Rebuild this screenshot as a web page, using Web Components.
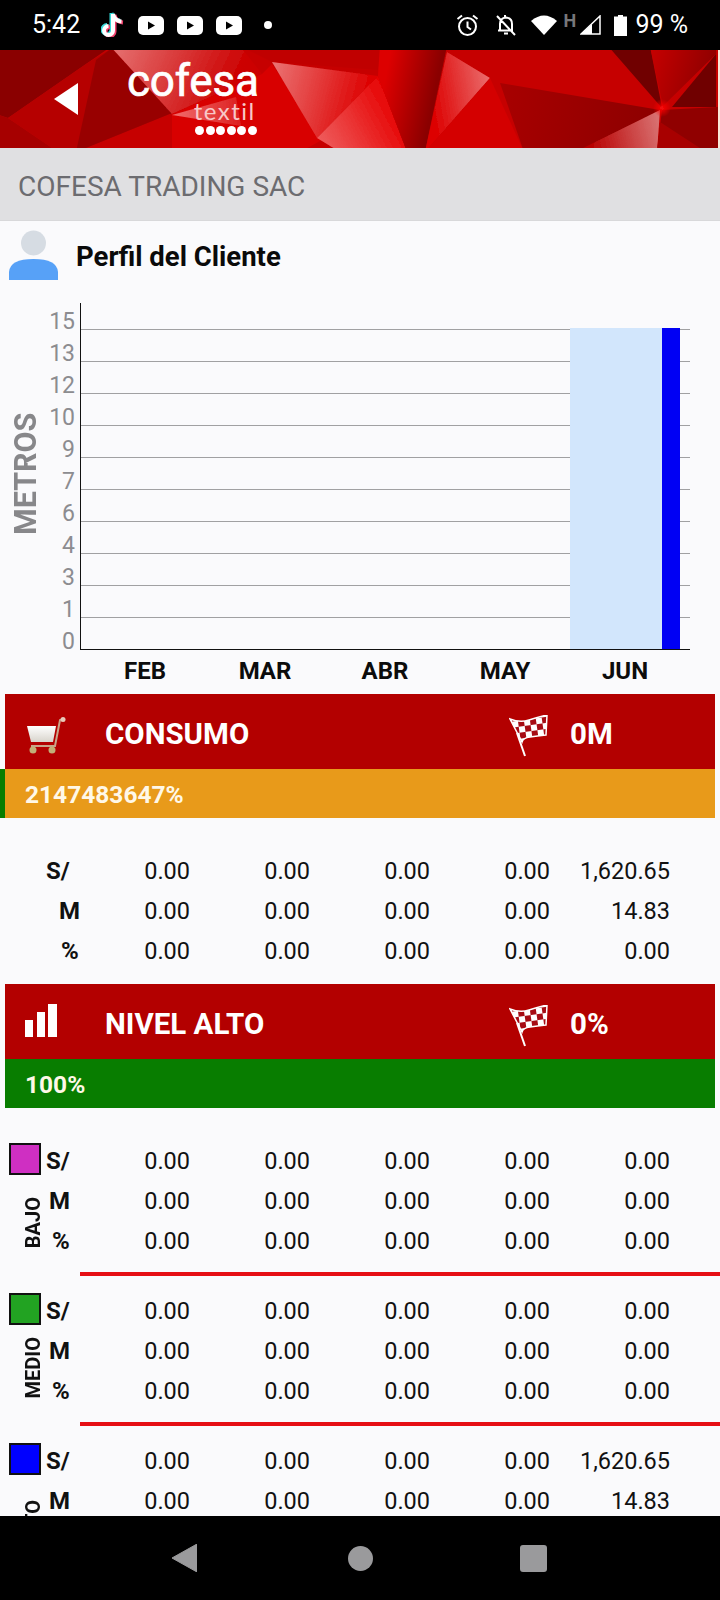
<!DOCTYPE html>
<html lang="es">
<head>
<meta charset="utf-8">
<title>Perfil del Cliente</title>
<style>
  html, body { margin: 0; padding: 0; }
  body {
    width: 720px;
    height: 1600px;
    display: flex;
    flex-direction: column;
    overflow: hidden;
    background: #fafafc;
    font-family: Roboto, "Liberation Sans", sans-serif;
    color: #111;
  }
  main { flex: 1; min-height: 0; overflow: hidden; }
  svg { display: block; }
</style>
</head>
<body>
<status-bar></status-bar>
<main>
  <app-header></app-header>
  <title-bar>COFESA TRADING SAC</title-bar>
  <profile-head>Perfil del Cliente</profile-head>
  <metros-chart></metros-chart>

  <stat-card goal="0M" percent="2147483647%" color="#e89a1a" stripe>
    <svg slot="icon" style="margin-top:6px" width="42" height="40" viewBox="0 0 42 40">
      <defs>
        <linearGradient id="basket" x1="0" y1="0" x2="0" y2="1">
          <stop offset="0" stop-color="#ffffff"/>
          <stop offset="1" stop-color="#d8d4cc"/>
        </linearGradient>
      </defs>
      <path d="M2 10H31L28 26H6Z" fill="url(#basket)"/>
      <path d="M40 3L35 4L30 30H6" fill="none" stroke="#c9a58a" stroke-width="2"/>
      <circle cx="38" cy="3.500" r="2.500" fill="#e8c8b8"/>
      <circle cx="8" cy="34" r="3.500" fill="#c2b078"/>
      <circle cx="27" cy="34" r="3.500" fill="#c2b078"/>
    </svg>
    CONSUMO
  </stat-card>
  <data-row label="S/" label-x="46" values="0.00|0.00|0.00|0.00|1,620.65" class="first"></data-row>
  <data-row label="M" label-x="59" values="0.00|0.00|0.00|0.00|14.83"></data-row>
  <data-row label="%" label-x="61" values="0.00|0.00|0.00|0.00|0.00" class="last"></data-row>

  <stat-card goal="0%" percent="100%" color="#087d00">
    <svg slot="icon" style="margin-bottom:4px" width="33" height="33" viewBox="0 0 33 33" fill="#fff">
      <rect x="0" y="16" width="8" height="17"/>
      <rect x="12" y="8" width="8" height="25"/>
      <rect x="23" y="0" width="9" height="33"/>
    </svg>
    NIVEL ALTO
  </stat-card>

  <level-section label="BAJO" color="#cf2fc2" class="first">
    <data-row label="S/" label-x="2" values="0.00|0.00|0.00|0.00|0.00"></data-row>
    <data-row label="M" label-x="5" values="0.00|0.00|0.00|0.00|0.00"></data-row>
    <data-row label="%" label-x="8" values="0.00|0.00|0.00|0.00|0.00"></data-row>
  </level-section>
  <level-section label="MEDIO" color="#22a322">
    <data-row label="S/" label-x="2" values="0.00|0.00|0.00|0.00|0.00"></data-row>
    <data-row label="M" label-x="5" values="0.00|0.00|0.00|0.00|0.00"></data-row>
    <data-row label="%" label-x="8" values="0.00|0.00|0.00|0.00|0.00"></data-row>
  </level-section>
  <level-section label="ALTO" color="#0000ff">
    <data-row label="S/" label-x="2" values="0.00|0.00|0.00|0.00|1,620.65"></data-row>
    <data-row label="M" label-x="5" values="0.00|0.00|0.00|0.00|14.83"></data-row>
    <data-row label="%" label-x="8" values="0.00|0.00|0.00|0.00|0.00"></data-row>
  </level-section>
</main>
<nav-bar></nav-bar>

<script>
const statusTemplate = document.createElement("template");
statusTemplate.innerHTML = `
    <style>
        :host {
            display: flex;
            align-items: center;
            flex: none;
            height: 50px;
            background: #000;
            color: #fff;
            font: 400 25px/50px Roboto, sans-serif;
        }

        .time { margin-left: 32px; width: 64px; }
        .tiktok { margin: -2px 0 0 5px; }
        .yt { margin-right: 13px; }
        .dot { width: 8px; height: 8px; margin-left: 9px; border-radius: 50%; background: #fff; }
        .right { display: flex; align-items: center; margin-left: auto; }
        .alarm { margin-right: 17px; }
        .bell { margin-right: 15px; }
        .wifi { margin-right: 6px; }
        .h { font: 700 18px/15px Roboto, sans-serif; color: #77777a; margin: -10px 2px 0 0; width: 15px; }
        .signal { margin-right: 13px; }
        .battery { margin-right: 8px; }
        .level { margin-right: 32px; white-space: nowrap; }
    </style>

    <span class="time">5:42</span>
    <svg class="tiktok" width="37" height="26" viewBox="0 0 37 26" fill="none" stroke-width="4">
        <path d="M10.500 2V18.500A4.500 4.500 0 1 1 6 14M10.500 2Q12 9 19 9.500" stroke="#35d8d8"/>
        <path d="M13.500 4V20.500A4.500 4.500 0 1 1 9 16M13.500 4Q15 11 22 11.500" stroke="#f0406c"/>
        <path d="M12 3V19.500A4.500 4.500 0 1 1 7.500 15M12 3Q13.500 10 20.500 10.500" stroke="#fff"/>
    </svg>
    <svg class="yt" width="26" height="19" viewBox="0 0 26 19"><rect width="26" height="19" rx="5" fill="#fff"/><path d="M10 5.500L17 9.500L10 13.500Z" fill="#000"/></svg>
    <svg class="yt" width="26" height="19" viewBox="0 0 26 19"><rect width="26" height="19" rx="5" fill="#fff"/><path d="M10 5.500L17 9.500L10 13.500Z" fill="#000"/></svg>
    <svg class="yt" width="26" height="19" viewBox="0 0 26 19"><rect width="26" height="19" rx="5" fill="#fff"/><path d="M10 5.500L17 9.500L10 13.500Z" fill="#000"/></svg>
    <span class="dot"></span>

    <div class="right">
        <svg class="alarm" width="23" height="23" viewBox="0 0 23 23" fill="none" stroke="#fff" stroke-width="2">
            <circle cx="11.500" cy="12.500" r="8.500"/>
            <path d="M11.500 7.500V13L15 15.500M1.500 5L6 1.500M21.500 5L17 1.500"/>
        </svg>
        <svg class="bell" width="20" height="22" viewBox="0 0 20 22" fill="none" stroke="#fff" stroke-width="2">
            <path d="M4 16.500V10Q4 4 10 3.500Q16 4 16 10V16.500ZM2 16.500H14M8 19.500H12M9 1V3M1 2L19 21"/>
        </svg>
        <svg class="wifi" width="26" height="20" viewBox="0 0 26 20"><path d="M0 6Q13 -5 26 6L13 20Z" fill="#fff"/></svg>
        <span class="h">H</span>
        <svg class="signal" width="21" height="20" viewBox="0 0 21 20">
            <path d="M20 1V19H1Z" fill="none" stroke="#fff" stroke-width="1.500"/>
            <path d="M12 9V19H1Z" fill="#fff"/>
        </svg>
        <svg class="battery" width="13" height="21" viewBox="0 0 13 21"><path d="M4 0H9V1.500H13V21H0V1.500H4Z" fill="#fff"/></svg>
        <span class="level">99 %</span>
    </div>
`;

class StatusBar extends HTMLElement {
  constructor() {
    super();
    this._shadowRoot = this.attachShadow({ mode: "open" });
    this._shadowRoot.appendChild(statusTemplate.content.cloneNode(true));
  }
}

const headerTemplate = document.createElement("template");
headerTemplate.innerHTML = `
    <style>
        :host {
            display: flex;
            position: relative;
            height: 98px;
            overflow: hidden;
            background: #fbe6d8;
        }

        .art { position: absolute; left: 0; top: 0; }
        .back { position: relative; margin: 33px 49px 0 54px; }
        .logo {
            position: relative;
            display: flex;
            flex-direction: column;
            align-items: flex-end;
            color: #fff;
            padding-top: 10px;
        }
        .name { font: 400 44px/42px Roboto, sans-serif; letter-spacing: -0.2px; -webkit-text-stroke: 0.7px #fff; }
        .sub { font: 400 24px/20px Lato, sans-serif; letter-spacing: 1.500px; color: #f8c8c8; margin: -1px 3px 0 0; }
        .dots { display: flex; gap: 1.500px; margin: 5px 2px 0 0; }
        .dots i { width: 9px; height: 9px; border-radius: 50%; background: #fff; }
    </style>

    <svg class="art" width="720" height="98" viewBox="0 0 720 98">
        <defs>
            <filter id="soft" x="-2%" y="-5%" width="104%" height="110%"><feGaussianBlur stdDeviation="0.600"/></filter>
            <linearGradient id="pinkA" gradientUnits="userSpaceOnUse" x1="120" y1="0" x2="230" y2="50">
                <stop offset="0" stop-color="#e46a6a"/><stop offset="1" stop-color="#cc0000"/>
            </linearGradient>
            <linearGradient id="pinkB" gradientUnits="userSpaceOnUse" x1="275" y1="15" x2="370" y2="40">
                <stop offset="0" stop-color="#ea7070"/><stop offset="1" stop-color="#dd0000"/>
            </linearGradient>
            <linearGradient id="pinkC" gradientUnits="userSpaceOnUse" x1="320" y1="90" x2="395" y2="50">
                <stop offset="0" stop-color="#ee5a5a"/><stop offset="1" stop-color="#e60000"/>
            </linearGradient>
            <linearGradient id="wedge" gradientUnits="userSpaceOnUse" x1="385" y1="30" x2="435" y2="40">
                <stop offset="0" stop-color="#dd0000"/><stop offset="1" stop-color="#8a0000"/>
            </linearGradient>
            <linearGradient id="pinkD" gradientUnits="userSpaceOnUse" x1="430" y1="50" x2="490" y2="40">
                <stop offset="0" stop-color="#dd0000"/><stop offset="1" stop-color="#ea6a6a"/>
            </linearGradient>
            <linearGradient id="pinkE" gradientUnits="userSpaceOnUse" x1="590" y1="97" x2="660" y2="80">
                <stop offset="0" stop-color="#b80000"/><stop offset="1" stop-color="#d87070"/>
            </linearGradient>
            <linearGradient id="darkF" gradientUnits="userSpaceOnUse" x1="500" y1="40" x2="650" y2="70">
                <stop offset="0" stop-color="#a80000"/><stop offset="1" stop-color="#8e0000"/>
            </linearGradient>
            <linearGradient id="pale" gradientUnits="userSpaceOnUse" x1="175" y1="64" x2="240" y2="60">
                <stop offset="0" stop-color="#f06a6a"/><stop offset="1" stop-color="#dd2020"/>
            </linearGradient>
            <linearGradient id="topRight" gradientUnits="userSpaceOnUse" x1="650" y1="10" x2="716" y2="30">
                <stop offset="0" stop-color="#c40000"/><stop offset="1" stop-color="#8a0000"/>
            </linearGradient>
            <radialGradient id="hot" gradientUnits="userSpaceOnUse" cx="662" cy="58" r="9">
                <stop offset="0" stop-color="#f80808"/><stop offset="1" stop-color="#f80808" stop-opacity="0"/>
            </radialGradient>
        </defs>
        <g filter="url(#soft)">
            <rect x="-4" y="-4" width="722" height="106" fill="#c60000"/>
            <path d="M-4 -4H112L86 14L8 68L-4 64Z" fill="#8a0000"/>
            <path d="M-4 64L8 68L58 102H-4Z" fill="#a60000"/>
            <path d="M8 68L86 14L112 -2L172 63L76 102H58Z" fill="#b60000"/>
            <path d="M96 10L112 -2L172 63L76 102Z" fill="#980000"/>
            <path d="M110 -4H240L262 24L172 64Z" fill="url(#pinkA)"/>
            <path d="M172 64L262 24L272 14L322 90L300 102H172Z" fill="#d80000"/>
            <path d="M172 65L236 47L241 76Z" fill="url(#pale)"/>
            <path d="M240 -4H380L378 20L272 12Z" fill="#c00000"/>
            <path d="M272 12L378 26L317 88Z" fill="url(#pinkB)"/>
            <path d="M378 26L407 102H340L317 88Z" fill="url(#pinkC)"/>
            <path d="M380 -4H447L425 102H407L378 26Z" fill="url(#wedge)"/>
            <path d="M447 2L490 28L425 102Z" fill="url(#pinkD)"/>
            <path d="M490 28L524 102H425Z" fill="#d40000"/>
            <path d="M500 33L660 60L583 102H524Z" fill="url(#darkF)"/>
            <path d="M660 60L657 102H575Z" fill="url(#pinkE)"/>
            <path d="M608 -4H650L662 58Z" fill="#700000"/>
            <path d="M650 -4H716V4L663 56Z" fill="url(#topRight)"/>
            <path d="M716 4V57H672Z" fill="#700000"/>
            <path d="M662 60L718 57V102H657Z" fill="#900000"/>
            <path d="M660 72L706 102H657Z" fill="#a80000"/>
            <circle cx="662" cy="58" r="9" fill="url(#hot)"/>
        </g>
        <rect x="718" y="0" width="2" height="98" fill="#fbe6d8"/>
    </svg>
    <svg class="back" width="24" height="32" viewBox="0 0 24 32"><path d="M0 16L24 0V32Z" fill="#fff"/></svg>
    <div class="logo">
        <span class="name">cofesa</span>
        <span class="sub">textil</span>
        <span class="dots"><i></i><i></i><i></i><i></i><i></i><i></i></span>
    </div>
`;

class AppHeader extends HTMLElement {
  constructor() {
    super();
    this._shadowRoot = this.attachShadow({ mode: "open" });
    this._shadowRoot.appendChild(headerTemplate.content.cloneNode(true));
  }
}

const titleTemplate = document.createElement("template");
titleTemplate.innerHTML = `
    <style>
        :host {
            display: flex;
            align-items: center;
            box-sizing: border-box;
            height: 73px;
            padding: 5px 0 0 18px;
            background: #e0e0e2;
            border-bottom: 1px solid #d8d8da;
            color: #6c6c70;
            font: 400 28px Roboto, sans-serif;
        }
    </style>
    <slot></slot>
`;

class TitleBar extends HTMLElement {
  constructor() {
    super();
    this._shadowRoot = this.attachShadow({ mode: "open" });
    this._shadowRoot.appendChild(titleTemplate.content.cloneNode(true));
  }
}

const profileTemplate = document.createElement("template");
profileTemplate.innerHTML = `
    <style>
        :host {
            display: flex;
            align-items: center;
            height: 82px;
            font: 700 27.500px Roboto, sans-serif;
            color: #0a0a0a;
        }

        svg { margin: -14px 17px 0 9px; flex: none; }
        span { margin-top: -12px; }
    </style>
    <svg width="50" height="50" viewBox="0 0 50 50">
        <circle cx="24.500" cy="13" r="12.500" fill="#d6dce3"/>
        <path d="M0 50V42Q1 29 24.500 29Q48 29 49 42V50Z" fill="#57a1f7"/>
    </svg>
    <span><slot></slot></span>
`;

class ProfileHead extends HTMLElement {
  constructor() {
    super();
    this._shadowRoot = this.attachShadow({ mode: "open" });
    this._shadowRoot.appendChild(profileTemplate.content.cloneNode(true));
  }
}

const chartTemplate = document.createElement("template");
chartTemplate.innerHTML = `
    <style>
        :host {
            display: block;
            font-family: Roboto, sans-serif;
            padding-bottom: 2px;
        }

        .top { display: flex; height: 347px; }
        .axis-name {
            width: 38px;
            margin-left: 11px;
            writing-mode: vertical-rl;
            transform: rotate(180deg);
            text-align: center;
            font: 700 30.500px/30px Roboto, sans-serif;
            color: #87878a;
            height: 347px;
            padding-top: 6px;
            box-sizing: border-box;
        }
        .ticks {
            width: 26px;
            padding-top: 3px;
            text-align: right;
            font-size: 23px;
            line-height: 32px;
            color: #8c8c90;
        }
        .plot {
            position: relative;
            box-sizing: border-box;
            width: 610px;
            margin-left: 5px;
            padding-top: 26px;
            border-left: 1px solid #111;
            border-bottom: 1px solid #111;
        }
        .line { height: 32px; box-sizing: border-box; border-top: 1px solid #a0a0a2; }
        .bar { position: absolute; top: 25px; bottom: 0; }
        .band { left: 489px; width: 92px; background: #d2e6fc; }
        .value { left: 581px; width: 18px; background: #0000f4; }
        .months {
            display: grid;
            grid-template-columns: repeat(5, 120px);
            margin-left: 85px;
            text-align: center;
            font: 700 24px/42px Roboto, sans-serif;
            color: #0c0c0c;
        }
    </style>
    <div class="top">
        <div class="axis-name">METROS</div>
        <div class="ticks"></div>
        <div class="plot">
            <div class="bar band"></div>
            <div class="bar value"></div>
        </div>
    </div>
    <div class="months"></div>
`;

class MetrosChart extends HTMLElement {
  constructor() {
    super();
    this._shadowRoot = this.attachShadow({ mode: "open" });
    this._shadowRoot.appendChild(chartTemplate.content.cloneNode(true));
    this.$ticks = this._shadowRoot.querySelector(".ticks");
    this.$plot = this._shadowRoot.querySelector(".plot");
    this.$months = this._shadowRoot.querySelector(".months");
  }

  connectedCallback() {
    ["15", "13", "12", "10", "9", "7", "6", "4", "3", "1", "0"].forEach((tick, i) => {
      const $tick = document.createElement("div");
      $tick.textContent = tick;
      this.$ticks.appendChild($tick);
      if (i < 10) {
        const $line = document.createElement("div");
        $line.className = "line";
        this.$plot.insertBefore($line, this.$plot.firstChild);
      }
    });
    ["FEB", "MAR", "ABR", "MAY", "JUN"].forEach((month) => {
      const $month = document.createElement("div");
      $month.textContent = month;
      this.$months.appendChild($month);
    });
  }
}

const cardTemplate = document.createElement("template");
cardTemplate.innerHTML = `
    <style>
        :host {
            display: block;
            margin: 0 5px;
            color: #fff;
            font-family: Roboto, sans-serif;
        }

        .head {
            display: flex;
            align-items: center;
            box-sizing: border-box;
            height: 75px;
            padding-top: 5px;
            background: #b30000;
            font-weight: 700;
            font-size: 29.500px;
        }
        .icon { width: 100px; box-sizing: border-box; padding: 0 0 3px 20px; flex: none; }
        .name { width: 404px; flex: none; }
        .flag { flex: none; margin-top: 4px; }
        .bar {
            box-sizing: border-box;
            height: 49px;
            padding: 3px 0 0 20px;
            font: 700 24.500px/46px Roboto, sans-serif;
            color: #fff8e8;
        }
        :host([stripe]) .bar {
            margin-left: -5px;
            border-left: 5px solid #087d00;
        }
    </style>
    <div class="head">
        <div class="icon"><slot name="icon"></slot></div>
        <div class="name"><slot></slot></div>
        <svg class="flag" width="61" height="42" viewBox="0 0 61 42">
            <defs>
                <pattern id="checks" width="12" height="12" patternUnits="userSpaceOnUse" patternTransform="rotate(-8) translate(2 1)">
                    <rect width="12" height="12" fill="#fff"/>
                    <rect width="6" height="6" fill="#a60c14"/>
                    <rect x="6" y="6" width="6" height="6" fill="#a60c14"/>
                </pattern>
            </defs>
            <path d="M1 4Q11 8 20 5T38 0L37 20Q28 21 21 22T13 27Z" fill="url(#checks)" stroke="#fff" stroke-width="1.500"/>
            <path d="M8 18L16 41" stroke="#fff" stroke-width="2"/>
        </svg>
        <div class="goal"></div>
    </div>
    <div class="bar"></div>
`;

class StatCard extends HTMLElement {
  constructor() {
    super();
    this._shadowRoot = this.attachShadow({ mode: "open" });
    this._shadowRoot.appendChild(cardTemplate.content.cloneNode(true));
    this.$goal = this._shadowRoot.querySelector(".goal");
    this.$bar = this._shadowRoot.querySelector(".bar");
  }

  connectedCallback() {
    this.$goal.textContent = this.getAttribute("goal");
    this.$bar.textContent = this.getAttribute("percent");
    this.$bar.style.background = this.getAttribute("color");
  }
}

const rowTemplate = document.createElement("template");
rowTemplate.innerHTML = `
    <style>
        :host {
            display: grid;
            grid-template-columns: var(--label-width, 70px) repeat(5, 120px);
            height: 40px;
            font: 400 23.500px/40px Roboto, sans-serif;
            color: #111;
            white-space: nowrap;
        }
        :host(.first) { margin-top: 33px; }
        :host(.last) { margin-bottom: 13px; }

        .label { font-weight: 700; font-size: 24px; }
        .value { text-align: right; }
    </style>
    <div class="label"></div>
`;

class DataRow extends HTMLElement {
  constructor() {
    super();
    this._shadowRoot = this.attachShadow({ mode: "open" });
    this._shadowRoot.appendChild(rowTemplate.content.cloneNode(true));
    this.$label = this._shadowRoot.querySelector(".label");
  }

  connectedCallback() {
    this.$label.textContent = this.getAttribute("label");
    this.$label.style.paddingLeft = this.getAttribute("label-x") + "px";
    this.getAttribute("values").split("|").forEach((value) => {
      const $value = document.createElement("div");
      $value.className = "value";
      $value.textContent = value;
      this._shadowRoot.appendChild($value);
    });
  }
}

const sectionTemplate = document.createElement("template");
sectionTemplate.innerHTML = `
    <style>
        :host {
            display: block;
            --label-width: 26px;
        }
        :host(.first) { margin-top: 33px; }

        .body { display: flex; height: 120px; }
        .side { width: 44px; flex: none; display: flex; flex-direction: column; }
        .swatch {
            box-sizing: border-box;
            width: 32px;
            height: 32px;
            margin: 2px 0 0 9px;
            border: 2px solid #111;
        }
        .name {
            margin: auto 0 13px 24px;
            width: 18px;
            writing-mode: vertical-rl;
            transform: rotate(180deg);
            font: 700 20px/18px Roboto, sans-serif;
            color: #111;
        }
        .rule { height: 4px; margin: 11px 0 15px 80px; background: #e60f14; }
    </style>
    <div class="body">
        <div class="side">
            <div class="swatch"></div>
            <div class="name"></div>
        </div>
        <div class="rows"><slot></slot></div>
    </div>
    <div class="rule"></div>
`;

class LevelSection extends HTMLElement {
  constructor() {
    super();
    this._shadowRoot = this.attachShadow({ mode: "open" });
    this._shadowRoot.appendChild(sectionTemplate.content.cloneNode(true));
  }

  connectedCallback() {
    this._shadowRoot.querySelector(".name").textContent = this.getAttribute("label");
    this._shadowRoot.querySelector(".swatch").style.background = this.getAttribute("color");
  }
}

const navTemplate = document.createElement("template");
navTemplate.innerHTML = `
    <style>
        :host {
            display: flex;
            align-items: center;
            flex: none;
            height: 84px;
            background: #000;
        }

        .back { margin-left: 172px; }
        .home { margin-left: 151px; }
        .recent { margin-left: 147px; }
    </style>
    <svg class="back" width="25" height="28" viewBox="0 0 25 28"><path d="M0 14L25 0V28Z" fill="#9a9a9c" stroke="#9a9a9c" stroke-linejoin="round"/></svg>
    <svg class="home" width="25" height="25" viewBox="0 0 25 25"><circle cx="12.500" cy="12.500" r="12.500" fill="#9a9a9c"/></svg>
    <svg class="recent" width="27" height="27" viewBox="0 0 27 27"><rect width="27" height="27" rx="3" fill="#9a9a9c"/></svg>
`;

class NavBar extends HTMLElement {
  constructor() {
    super();
    this._shadowRoot = this.attachShadow({ mode: "open" });
    this._shadowRoot.appendChild(navTemplate.content.cloneNode(true));
  }
}

window.customElements.define("status-bar", StatusBar);
window.customElements.define("app-header", AppHeader);
window.customElements.define("title-bar", TitleBar);
window.customElements.define("profile-head", ProfileHead);
window.customElements.define("metros-chart", MetrosChart);
window.customElements.define("stat-card", StatCard);
window.customElements.define("data-row", DataRow);
window.customElements.define("level-section", LevelSection);
window.customElements.define("nav-bar", NavBar);
</script>
</body>
</html>
